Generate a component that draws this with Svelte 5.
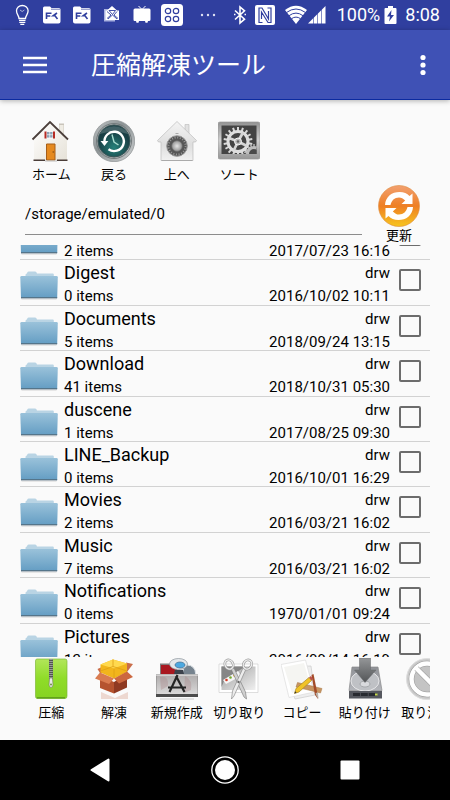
<script>
  const navTools = [
    { id: 'home', label: 'ホーム' },
    { id: 'back', label: '戻る' },
    { id: 'up', label: '上へ' },
    { id: 'sort', label: 'ソート' }
  ];
  const fileTools = [
    { id: 'zip', label: '圧縮' },
    { id: 'unzip', label: '解凍' },
    { id: 'create', label: '新規作成' },
    { id: 'cut', label: '切り取り' },
    { id: 'copy', label: 'コピー' },
    { id: 'paste', label: '貼り付け' },
    { id: 'cancel', label: '取り消し' }
  ];
  const files = [
    { name: 'DCIM', items: 2, date: '2017/07/23 16:16' },
    { name: 'Digest', items: 0, date: '2016/10/02 10:11' },
    { name: 'Documents', items: 5, date: '2018/09/24 13:15' },
    { name: 'Download', items: 41, date: '2018/10/31 05:30' },
    { name: 'duscene', items: 1, date: '2017/08/25 09:30' },
    { name: 'LINE_Backup', items: 0, date: '2016/10/01 16:29' },
    { name: 'Movies', items: 2, date: '2016/03/21 16:02' },
    { name: 'Music', items: 7, date: '2016/03/21 16:02' },
    { name: 'Notifications', items: 0, date: '1970/01/01 09:24' },
    { name: 'Pictures', items: 12, date: '2016/09/14 16:19' }
  ];
  const teeth = Array.from({ length: 18 }, (_, i) => i * 20);
  let path = $state('/storage/emulated/0');
</script>

{#snippet statusIcon(id)}
  <svg class="slot" viewBox="0 0 30 30" aria-hidden="true">
    {#if id === 'bulb'}
      <path d="M12 18.5C12 15.500 9.500 14.500 9.500 10.800a5.800 5.300 0 0 1 11.600 0c0 3.700-2.600 4.700-2.600 7.700z" fill="none" stroke="#fff" stroke-width="1.300" />
      <path d="M12 20.300h6.500M12.300 22.300h6M13.300 24.300h4" stroke="#fff" stroke-width="1.300" />
      <path d="M13 10l2.200 1.500 2.200-1.500" fill="none" stroke="#fff" stroke-width=".6" />
    {:else if id === 'fk'}
      <path d="M6 8q0-1.500 1.500-1.500h5.500l1.500 1.500h7.500q1.500 0 1.500 1.500v12q0 2-2 2h-13.500q-2 0-2-2z" fill="#fff" />
      <path d="M14 9.200h9" stroke="#303f9f" stroke-width=".7" />
      <path d="M9.500 19v-5.700h5M9.500 16h3.800M20 13l-3.800 2.800 1.800 0 2.500 3.200" fill="none" stroke="#303f9f" stroke-width="1.600" />
    {:else if id === 'mail'}
      <path d="M7 9h11v12.500h-11z" fill="#aab2df" />
      <path d="M10 10.500l5-4.500 5 4.500h2v9.500h-13.500v-9.500z" fill="#fff" />
      <path d="M10 18.500l4-3.500-4-3.500M21 18.500l-4-3.500 3-3.500M12 10.500h6.500l-3 4zM11 19l4.500-4 4.500 4" fill="none" stroke="#303f9f" stroke-width=".9" />
    {:else if id === 'tv'}
      <path d="M8 8.500h14q1.500 0 1.500 1.500v9.500q0 1.500-1.500 1.500h-1l-.5 1.800h-2l-.5-1.800h-6l-.5 1.800h-2l-.5-1.800h-1.500q-1 0-1-1.500v-9.500q0-1.500 1.500-1.500z" fill="#fff" />
      <path d="M11.500 6l3.500 3.500 3.500-3.500" stroke="#fff" stroke-width="1" fill="none" />
    {:else if id === 'apps'}
      <rect x="4" y="4" width="22" height="22" rx="3.500" fill="#fff" />
      <g fill="none" stroke="#303f9f" stroke-width="1.200">
        <circle cx="11" cy="11" r="2.700" /><circle cx="19" cy="11" r="2.700" />
        <circle cx="11" cy="19" r="2.700" /><circle cx="19" cy="19" r="2.700" />
      </g>
    {:else}
      <g fill="#dfe2f3"><circle cx="15" cy="15" r="1.200" /><circle cx="21" cy="15" r="1.200" /><circle cx="27" cy="15" r="1.200" /></g>
    {/if}
  </svg>
{/snippet}

{#snippet folder()}
  <svg class="folder" viewBox="0 0 38 38" aria-hidden="true">
    <path d="M5.500 10V5q0-.8.800-1l1-1.600q.4-.9 1.500-.9h6.200q1 0 1.400.8l.6 1.200h15.800q1 0 1 1v6h-28z" fill="#b9d4e4" />
    <path d="M1.500 6h35q1.300 0 1.300 1.200l-.6 20.800H1L.3 7.200Q.3 6 1.500 6z" fill="url(#folderFace)" />
    <path d="M1 27h36.200l-.1 1.500H1.100z" fill="#55758a" />
    <path d="M1.500 29h35" stroke="#c9c9c9" stroke-width=".8" />
  </svg>
{/snippet}

{#snippet toolIcon(id)}
  <svg class="tool-icon" viewBox="0 0 42 42" aria-hidden="true">
    {#if id === 'home'}
      <path d="M29.500 4.500h4v13h-4z" fill="#efece4" stroke="#c8c3b5" stroke-width=".5" />
      <path d="M29 3.500h5v1.500h-5z" fill="#c9c4bb" />
      <path d="M4 20L20 3l17 17v20.500H4z" fill="url(#wall)" />
      <path d="M2.500 19.500L20 2 38 19.500" fill="none" stroke="#4b3f3b" stroke-width="1.800" />
      <path d="M3.500 40.300h11.500M27 40.300h10.500" stroke="#4a3d38" stroke-width="1.400" />
      <path d="M16.500 11.500h6.500v6.500h-6.500z" fill="#8ba2b5" stroke="#fff" stroke-width=".8" />
      <path d="M19.700 11.500v6.500M16.500 14.700h6.500" stroke="#fff" stroke-width=".6" />
      <path d="M14.500 11.500h2v7h-2zM23 11.500h2v7h-2z" fill="#b52b24" />
      <path d="M16.500 24h8.500v16h-8.500z" fill="#e58a20" stroke="#a65e18" stroke-width="1" />
      <circle cx="23.200" cy="32" r=".7" fill="#70400f" />
      <path d="M15 41h12" stroke="#bbb" />
    {:else if id === 'back'}
      <circle cx="21" cy="21" r="20.700" fill="url(#metal)" stroke="#8d9192" stroke-width=".7" />
      <circle cx="21" cy="21" r="17.500" fill="none" stroke="#747b7d" stroke-width="1" />
      <circle cx="21" cy="21" r="16" fill="url(#teal)" stroke="#3b5557" />
      <path d="M11.500 22.500a9.700 9.700 0 1 1 4 6.800" fill="none" stroke="#fff" stroke-width="2.400" />
      <path d="M7.500 21h7.800l-3.800 5z" fill="#fff" />
      <path d="M19 14.500l2 7.500 4.500 3" stroke="#a9ddd0" stroke-width="1.400" fill="none" />
      <path d="M7 14a16 15 0 0 1 28 0q-14-5-28 0z" fill="#fff" opacity=".18" />
    {:else if id === 'up'}
      <path d="M29 4.500h4v12h-4z" fill="#e2e2e2" stroke="#bbb" stroke-width=".6" />
      <path d="M21 1.500L40.500 20.500l-1 1.500H37v18.500H5V22H2.500L1.500 20.500z" fill="url(#safe)" stroke="#bcbcbc" stroke-width=".7" />
      <path d="M5.500 40.500h31" stroke="#aaa" />
      <circle cx="21" cy="26" r="10.300" fill="#565656" stroke="#999" />
      <circle cx="21" cy="26" r="8.500" fill="none" stroke="#999" stroke-width="1.800" stroke-dasharray="1 1.670" />
      <circle cx="21" cy="26" r="5.200" fill="url(#knob)" stroke="#777" stroke-width=".6" />
      <path d="M19.500 13.500h3" stroke="#aaa" />
    {:else if id === 'sort'}
      <path d="M0 4q0-2 2-2h38q2 0 2 2v33q0 2-2 2H2q-2 0-2-2z" fill="url(#frame)" stroke="#9a9a9a" stroke-width=".7" />
      <path d="M3.500 5.500h35v28.500h-35z" fill="#444" />
      <svg x="3.500" y="5.500" width="35" height="28.500" viewBox="3.500 5.500 35 28.500">
        <g stroke="#d8d8d8" stroke-width="2">
          {#each teeth as angle}
            <path d="M20 7v4" transform={`rotate(${angle} 20 21.500)`} />
            <path d="M36 24v3" stroke="#b5b5b5" stroke-width="1.500" transform={`rotate(${angle} 36 34)`} />
          {/each}
        </g>
        <circle cx="20" cy="21.500" r="10" fill="none" stroke="#dedede" stroke-width="3" />
        <circle cx="36" cy="34" r="6.500" fill="#4a4a4a" stroke="#bcbcbc" stroke-width="3" />
        <path d="M20 21.500L11 18M20 21.500L25 12.500M20 21.500L29 26M20 21.500L16 30" stroke="#d5d5d5" stroke-width="2.700" />
        <circle cx="20" cy="21.500" r="3.500" fill="#bdbdbd" stroke="#f5f5f5" />
        <circle cx="20" cy="21.500" r="1.300" fill="#666" />
      </svg>
    {:else if id === 'refresh'}
      <circle cx="21" cy="21" r="20.500" fill="url(#orange)" stroke="#dd8a3a" stroke-width=".6" />
      <path d="M7 20C7.500 11.500 14 7 21.500 7c4.500 0 7.500 1.500 10 4l3-2.500v10.500H23.500l3.700-3.400C25 13.500 23.500 12.500 21 12.500c-4.500 0-7.500 3-8.500 7.500z" fill="#fff" />
      <path d="M35 22C34.500 30.500 28 35 20.500 35c-4.500 0-7.500-1.500-10-4l-3 2.500V23H18.500l-3.700 3.400c2.200 2.100 3.700 3.100 6.200 3.100 4.500 0 7.500-3 8.500-7.500z" fill="#fff" />
    {:else if id === 'zip'}
      <path d="M7 1h28q2 0 2 2v35q0 2.500-2 2.500H7Q5.500 40.500 5.500 38V3Q5.500 1 7 1z" fill="url(#green)" stroke="#7fb93a" stroke-width=".7" />
      <path d="M7 39.800h28" stroke="#5b9a1b" stroke-width="1.300" />
      <path d="M21 1v21" stroke="#51594c" stroke-width="4" />
      <path d="M21 1v21" stroke="#c9c9c9" stroke-width="3" stroke-dasharray="1 1" />
      <path d="M21 1v21" stroke="#555" stroke-width=".8" />
      <path d="M19.500 20h3l.5 7q-.5 2.500-2 2.500t-2-2.500z" fill="#e8e8e8" stroke="#6e7e5a" stroke-width=".6" />
      <circle cx="21" cy="26.500" r="1" fill="#6f9440" />
    {:else if id === 'unzip'}
      <path d="M8 34l14 6 13-6v7H8z" fill="#b94e28" opacity=".2" />
      <path d="M7 18l14 6v11.500L7 30z" fill="#b5532f" />
      <path d="M21 24l13-8v13.500l-13 6z" fill="#8f3a22" />
      <path d="M7 15L4.500 11 9 9v6M34 14l6-8-7-1.500z" fill="#c96d4a" />
      <path d="M7.500 6.500L20 1.500 34 5.500V14l-13 6.500L7.500 14.500z" fill="#f2b51c" />
      <path d="M7.500 6.500L20 1.500 34 5.500 21 10.500z" fill="#ffd94e" />
      <path d="M21 10.500v9.500M20 1.500v7M7.500 13L20 8.500 34 13" stroke="#dda014" stroke-width=".8" fill="none" />
      <path d="M7 14.500L2 20.500 16 26 21 20.500z" fill="#d97b50" />
      <path d="M34 13.500L40 19 26 25.500 21 20.500z" fill="#cc6840" />
    {:else if id === 'create'}
      <path d="M4 5.500h15v14H4z" fill="#817b7b" />
      <path d="M5 7h15l2 10H5z" fill="#a91820" />
      <path d="M28 8q7-3 11 4l1 6H26z" fill="#76838e" stroke="#dce1e5" />
      <ellipse cx="22.500" cy="6" rx="9" ry="5.500" fill="#e4e8eb" stroke="#8b949b" stroke-width=".7" />
      <ellipse cx="24" cy="7" rx="5" ry="3" fill="#4ca9e1" stroke="#345c80" stroke-width=".6" />
      <path d="M19 12h8l1 4H18z" fill="#3b424b" />
      <path d="M0 16.500h42v21H0z" fill="url(#box)" stroke="#777" stroke-width=".8" />
      <path d="M0 17h42" stroke="#f4f4f4" stroke-width="1.200" />
      <path d="M0 36h42v3H0z" fill="#4c4c4c" />
      <path d="M4 19q9-2 8 9l-7 4zM29 18q8 4 6 14l-7 3z" fill="#aa8587" opacity=".35" />
      <path d="M21.500 17l-8 17M20 18l8.500 16M12 29.500h18" stroke="#252525" stroke-width="2.200" fill="none" />
      <path d="M4 41h34" stroke="#ccc" />
    {:else if id === 'cut'}
      <path d="M1 6h39v28.500H1z" fill="#fff" stroke="#d0d0d0" stroke-width=".7" />
      <path d="M3.500 8.500h34V32h-34z" fill="url(#photo)" />
      <path d="M3.500 8.500H27L6 23l-2.500 6z" fill="#868686" />
      <path d="M5 22l15-9 3 5-15 8z" fill="#f5f5f5" />
      <circle cx="8.500" cy="22" r="1.300" fill="#d33b26" /><circle cx="12.500" cy="19.500" r="1.300" fill="#75aa32" /><circle cx="16.500" cy="17.500" r="1.300" fill="#e5a52c" />
      <path d="M13 11l13 28 2.500 2-1-7L16 10z" fill="#d0d0d0" stroke="#747474" stroke-width=".6" />
      <path d="M28 11L16 38l-2.500 3 1-8L25 10z" fill="#ececec" stroke="#7d7d7d" stroke-width=".6" />
      <g fill="none" stroke="#9b9b9b" stroke-width="2.600">
        <ellipse cx="11" cy="6.500" rx="4" ry="4.800" transform="rotate(-30 11 6.500)" /><ellipse cx="29.500" cy="6.500" rx="4" ry="4.800" transform="rotate(30 29.500 6.500)" />
      </g>
      <g fill="none" stroke="#ededed" stroke-width="1.400">
        <ellipse cx="11" cy="6.500" rx="4" ry="4.800" transform="rotate(-30 11 6.500)" /><ellipse cx="29.500" cy="6.500" rx="4" ry="4.800" transform="rotate(30 29.500 6.500)" />
      </g>
      <circle cx="20.500" cy="24" r="1.200" fill="#666" />
    {:else if id === 'copy'}
      <path d="M2 9l28-1 4 29-20 4z" fill="#eee" stroke="#ccc" stroke-width=".7" />
      <path d="M0 6.500L24.500 2 33 34 8 39.500z" fill="#fff" stroke="#dcdcdc" stroke-width=".7" />
      <path d="M3 9l20-4 7 25-19 5z" fill="#f5f5f2" />
      <path d="M16.500 24.500l24.500 6-1.500 4.500L15 29z" fill="#c79561" stroke="#a77645" stroke-width=".5" />
      <path d="M30.500 17l2-1 4 20 .5 5-3-4z" fill="#a34b27" />
      <path d="M34.500 35l2.500-.5.500 6.500-2-3z" fill="#b8b1a8" />
      <path d="M13.500 35.500l1.500-5L28 19.500l2.500 3L18 34z" fill="#f1c326" stroke="#a88626" stroke-width=".7" />
      <path d="M28 19.500l2-1.500 2 3-1.500 1.500z" fill="#bb514b" />
      <path d="M13.500 35.500l.6-2.200 1.500 1.500z" fill="#333" />
    {:else if id === 'paste'}
      <path d="M8 9h26l4 23.500H5z" fill="url(#plate)" stroke="#8b8b8d" stroke-width=".7" />
      <ellipse cx="21" cy="23" rx="14" ry="10" fill="#bfc1c5" stroke="#e6e6e8" />
      <ellipse cx="21" cy="26" rx="5" ry="3" fill="#d9dadd" stroke="#97999c" stroke-width=".7" />
      <path d="M5 33h33v7.500H5z" fill="#55575e" />
      <path d="M9 36.500h24" stroke="#282a30" stroke-width="3" stroke-dasharray="7 .8" />
      <path d="M31 35.500h2.500v2h-2.500z" fill="#c7d94b" />
      <path d="M15.500 0h11v12h5.500L21 24.500 10.500 12h5z" fill="url(#arrow)" stroke="#66686a" stroke-width=".5" />
    {:else}
      <circle cx="21" cy="21" r="20.500" fill="#c9c9c9" stroke="#dedede" />
      <circle cx="21" cy="21" r="15.500" fill="#c4c4c4" stroke="#9a9a9a" stroke-width="5.500" />
      <circle cx="21" cy="21" r="15.500" fill="none" stroke="#fff" stroke-width="4.500" />
      <path d="M10.500 10.500l21 21" stroke="#999" stroke-width="5.500" />
      <path d="M10 10l22 22" stroke="#fff" stroke-width="4.500" />
    {/if}
  </svg>
{/snippet}

<svg class="defs" width="0" height="0" aria-hidden="true">
  <defs>
    <linearGradient id="folderFace" x1="0" y1="0" x2="0" y2="1"><stop offset="0" stop-color="#9ac2da" /><stop offset="1" stop-color="#649dc3" /></linearGradient>
    <linearGradient id="wall" x1="0" y1="0" x2="1" y2="1"><stop offset="0" stop-color="#fff" /><stop offset="1" stop-color="#e6e2d8" /></linearGradient>
    <linearGradient id="metal" x1="0" y1="0" x2="1" y2="1"><stop offset="0" stop-color="#c3c7c8" /><stop offset=".4" stop-color="#8b9294" /><stop offset="1" stop-color="#d0d2d3" /></linearGradient>
    <linearGradient id="plate" x1="0" y1="0" x2="0" y2="1"><stop offset="0" stop-color="#8f9196" /><stop offset="1" stop-color="#b4b6bb" /></linearGradient>
    <radialGradient id="teal" cx=".5" cy=".7"><stop offset="0" stop-color="#248079" /><stop offset="1" stop-color="#193f45" /></radialGradient>
    <linearGradient id="safe" x1="0" y1="0" x2="0" y2="1"><stop offset="0" stop-color="#f4f4f4" /><stop offset=".6" stop-color="#dedede" /><stop offset="1" stop-color="#f1f1f1" /></linearGradient>
    <radialGradient id="knob"><stop offset="0" stop-color="#e5e5e5" /><stop offset="1" stop-color="#969696" /></radialGradient>
    <linearGradient id="frame" x1="0" y1="0" x2="0" y2="1"><stop offset="0" stop-color="#929292" /><stop offset=".5" stop-color="#d0d0d0" /><stop offset="1" stop-color="#969696" /></linearGradient>
    <linearGradient id="orange" x1="0" y1="0" x2="0" y2="1"><stop offset="0" stop-color="#f2a070" /><stop offset=".5" stop-color="#ee7f25" /><stop offset="1" stop-color="#f7c51e" /></linearGradient>
    <linearGradient id="green" x1="0" y1="0" x2="0" y2="1"><stop offset="0" stop-color="#b2e65a" /><stop offset=".5" stop-color="#8fdc28" /><stop offset="1" stop-color="#86d322" /></linearGradient>
    <linearGradient id="box" x1="0" y1="0" x2="0" y2="1"><stop offset="0" stop-color="#aeabab" /><stop offset="1" stop-color="#dddcdc" /></linearGradient>
    <linearGradient id="photo" x1="0" y1="0" x2="1" y2="1"><stop offset="0" stop-color="#9d9d9d" /><stop offset="1" stop-color="#f0f0f0" /></linearGradient>
    <linearGradient id="arrow" x1="0" y1="0" x2="0" y2="1"><stop offset="0" stop-color="#949698" /><stop offset="1" stop-color="#535557" /></linearGradient>
  </defs>
</svg>

<div class="screen">
  <div class="status">
    <div class="notices">
      {#each ['bulb', 'fk', 'fk', 'mail', 'tv', 'apps', 'more'] as id}
        {@render statusIcon(id)}
      {/each}
    </div>
    <div class="system">
      <svg width="14" height="20" viewBox="0 0 14 20" aria-hidden="true"><path d="M2 5.500l9.500 8.700L7 18V2l4.500 3.800L2 14.500" fill="none" stroke="#fff" stroke-width="1.600" /><path d="M1 9.500h1.500M11.500 9.500H13" stroke="#fff" stroke-width="1.500" /></svg>
      <svg class="nfc" width="20" height="20" viewBox="0 0 20 20" aria-hidden="true"><rect width="20" height="20" rx="2" fill="#fff" /><path d="M7.500 17.500H4V3h3l6.500 11V6M12.500 3H16v14.500h-3L6.500 7v7" fill="none" stroke="#303f9f" stroke-width="1.200" /></svg>
      <svg width="22" height="20" viewBox="0 0 22 20" aria-hidden="true"><path d="M0 5Q11-3.500 22 5L11 19z" fill="#fff" /><path d="M1.500 7.500Q11 .5 20.500 7.500M4 10.700Q11 5.500 18 10.700M6.500 13.700Q11 10.500 15.500 13.700" fill="none" stroke="#303f9f" stroke-width="1" /></svg>
      <svg width="20" height="20" viewBox="0 0 20 20" aria-hidden="true"><path d="M1 18.500L18.500 1v17.500z" fill="#fff" /><path d="M6.500 10v9M10.500 6v13M14.500 2v17" stroke="#303f9f" stroke-width=".6" /></svg>
      <span class="percent">100%</span>
      <svg width="13" height="20" viewBox="0 0 13 20" aria-hidden="true"><path d="M4 1h5v2h2.500q1 0 1 1v14q0 1-1 1h-10q-1 0-1-1V4q0-1 1-1H4z" fill="#fff" /><path d="M7.500 5L3 11.500h3L5 16.500l5-6.500H7z" fill="#303f9f" /></svg>
      <span class="clock">8:08</span>
    </div>
  </div>

  <header>
    <button class="menu" aria-label="メニュー">
      <svg width="24" height="24" viewBox="0 0 24 24"><path d="M0 5h24M0 12h24M0 19h24" stroke="#fff" stroke-width="2.400" /></svg>
    </button>
    <h1>圧縮解凍ツール</h1>
    <button class="more" aria-label="その他">
      <svg width="6" height="24" viewBox="0 0 6 24"><g fill="#fff"><circle cx="3" cy="4.500" r="2.600" /><circle cx="3" cy="12" r="2.600" /><circle cx="3" cy="19.500" r="2.600" /></g></svg>
    </button>
  </header>

  <main>
    <div class="strip top">
      <div class="tools">
        {#each navTools as tool}
          <button class="tool">{@render toolIcon(tool.id)}<span>{tool.label}</span></button>
        {/each}
      </div>
    </div>

    <div class="location">
      <input type="text" aria-label="パス" bind:value={path} />
      <button class="tool refresh">{@render toolIcon('refresh')}<span>更新</span></button>
    </div>

    <div class="list">
      <ul>
        {#each files as file}
          <li>
            {@render folder()}
            <div class="info">
              <span class="name">{file.name}</span>
              <span>{file.items} items</span>
            </div>
            <div class="meta">
              <span class="mode">drw</span>
              <span>{file.date}</span>
            </div>
            <input type="checkbox" aria-label={file.name} />
          </li>
        {/each}
      </ul>
    </div>

    <div class="strip bottom">
      <div class="tools">
        {#each fileTools as tool}
          <button class="tool">{@render toolIcon(tool.id)}<span>{tool.label}</span></button>
        {/each}
      </div>
    </div>
  </main>

  <nav>
    <button aria-label="戻る"><svg width="28" height="28" viewBox="0 0 28 28"><path d="M5.500 14L22.500 3.500v21z" fill="#fff" stroke="#fff" stroke-width="2" stroke-linejoin="round" /></svg></button>
    <button aria-label="ホーム"><svg width="28" height="28" viewBox="0 0 28 28"><circle cx="14" cy="14" r="13.200" fill="none" stroke="#fff" stroke-width="1.300" /><circle cx="14" cy="14" r="10" fill="#fff" /></svg></button>
    <button aria-label="履歴"><svg width="28" height="28" viewBox="0 0 28 28"><rect x="4.500" y="4.500" width="19" height="19" rx="1" fill="#fff" /></svg></button>
  </nav>
</div>

<style>
  :global(body) {
    margin: 0;
    background: #fafafa;
  }
  .defs {
    position: absolute;
  }
  .screen {
    display: flex;
    flex-direction: column;
    height: 100vh;
    overflow: hidden;
    background: #fafafa;
    color: #000;
    font-family: Roboto, "Noto Sans CJK JP", sans-serif;
    font-size: 15px;
  }
  svg {
    display: block;
    flex: none;
  }
  button {
    margin: 0;
    padding: 0;
    border: 0;
    background: none;
    color: inherit;
    font: inherit;
    cursor: pointer;
  }
  .status {
    display: flex;
    justify-content: space-between;
    align-items: center;
    flex: none;
    height: 30px;
    padding: 0 10px 0 7px;
    background: #303f9f;
    color: #fff;
    font-size: 18px;
    line-height: 30px;
  }
  .notices,
  .system {
    display: flex;
    align-items: center;
  }
  .slot {
    width: 30px;
    height: 30px;
  }
  .nfc {
    margin: 0 10px 0 8px;
  }
  .percent {
    margin: 0 4px 0 10px;
  }
  .clock {
    margin-left: 8px;
  }
  header {
    display: flex;
    align-items: center;
    flex: none;
    box-sizing: border-box;
    height: 70px;
    padding: 0 24px 0 23px;
    border-bottom: 1px solid #0b2aa0;
    background: #3f51b5;
    box-shadow: 0 1px 5px rgba(0, 0, 0, 0.3);
    color: #fff;
  }
  h1 {
    flex: 1;
    margin: 0 0 0 44px;
    padding-top: 3px;
    font-size: 25px;
    font-weight: 400;
    line-height: 36px;
  }
  main {
    display: flex;
    flex: 1;
    flex-direction: column;
    min-height: 0;
    padding: 0 20px;
  }
  .strip {
    flex: none;
    overflow: hidden;
  }
  .top {
    padding-top: 20px;
  }
  .bottom {
    padding: 1px 0 17px;
  }
  .tools {
    display: grid;
    grid-template-columns: repeat(7, 1fr);
    width: 107%;
  }
  .tool {
    display: flex;
    flex-direction: column;
    align-items: center;
    gap: 3px;
    font-size: 13px;
    line-height: 20px;
    white-space: nowrap;
  }
  .tool-icon {
    width: 42px;
    height: 42px;
  }
  .location {
    display: flex;
    align-items: center;
    flex: none;
    gap: 6px;
  }
  .location input {
    flex: 1;
    align-self: flex-start;
    box-sizing: border-box;
    min-width: 0;
    height: 42px;
    margin: 8px 0 0 5px;
    padding: 0;
    border: 0;
    border-bottom: 1px solid #8c8c8c;
    border-radius: 0;
    outline: 0;
    background: none;
    color: inherit;
    font: inherit;
  }
  .refresh {
    gap: 0;
    width: 62px;
    line-height: 18px;
  }
  .list {
    flex: 1;
    min-height: 0;
    overflow: hidden;
  }
  ul {
    display: grid;
    grid-template-rows: repeat(10, minmax(0, 1fr));
    height: 454px;
    margin: -30px 0 0;
    padding: 0;
    list-style: none;
  }
  li {
    display: flex;
    align-items: flex-start;
    box-sizing: border-box;
    padding-right: 9px;
    border-bottom: 1px solid #d2d2d2;
  }
  .folder {
    width: 38px;
    height: 38px;
    margin: 10px 6px 0 0;
  }
  .info,
  .meta {
    display: flex;
    flex-direction: column;
    padding-top: 1px;
    line-height: 22px;
  }
  .info {
    flex: 1;
  }
  .meta {
    align-items: flex-end;
    margin-right: 9px;
  }
  .name,
  .mode {
    line-height: 24px;
  }
  .name {
    font-size: 18px;
  }
  input[type='checkbox'] {
    appearance: none;
    box-sizing: border-box;
    width: 22px;
    height: 22px;
    margin: 9px 0 0;
    border: 2px solid #6c6c6c;
    border-radius: 2px;
  }
  input[type='checkbox']:checked {
    background: #3f51b5;
  }
  nav {
    display: flex;
    justify-content: space-between;
    align-items: center;
    flex: none;
    height: 60px;
    padding: 0 86px;
    background: #000;
  }
</style>
